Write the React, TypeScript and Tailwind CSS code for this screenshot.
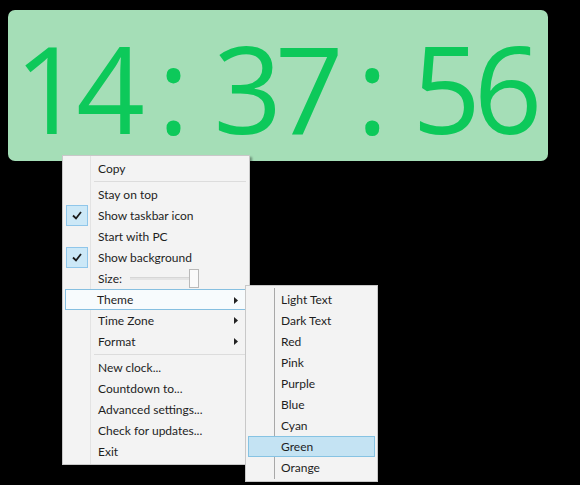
import React from "react"

const ui = { fontFamily: 'Lato, "Noto Sans", sans-serif' }

type Item =
  | { kind: "item"; label: string; checked?: boolean; sub?: boolean; active?: boolean }
  | { kind: "sep" }
  | { kind: "size" }

const menuItems: Item[] = [
  { kind: "item", label: "Copy" },
  { kind: "sep" },
  { kind: "item", label: "Stay on top" },
  { kind: "item", label: "Show taskbar icon", checked: true },
  { kind: "item", label: "Start with PC" },
  { kind: "item", label: "Show background", checked: true },
  { kind: "size" },
  { kind: "item", label: "Theme", sub: true, active: true },
  { kind: "item", label: "Time Zone", sub: true },
  { kind: "item", label: "Format", sub: true },
  { kind: "sep" },
  { kind: "item", label: "New clock..." },
  { kind: "item", label: "Countdown to..." },
  { kind: "item", label: "Advanced settings..." },
  { kind: "item", label: "Check for updates..." },
  { kind: "item", label: "Exit" },
]

const themes = ["Light Text", "Dark Text", "Red", "Pink", "Purple", "Blue", "Cyan", "Green", "Orange"]

function Check() {
  return (
    <div className="w-[22px] h-[21px] bg-[#cce8f7] border border-[#8fc6ea] flex items-center justify-center">
      <svg width="10" height="9" viewBox="0 0 10 9">
        <path d="M1 4.5 L4 7.5 L9 1" fill="none" stroke="#1a1a1a" strokeWidth="1.8" />
      </svg>
    </div>
  )
}

function Arrow() {
  return (
    <svg width="4" height="7" viewBox="0 0 4 7" className="absolute right-[8px] top-[7px]">
      <path d="M0 0 L4 3.5 L0 7 Z" fill="#222" />
    </svg>
  )
}

function MenuRow({ item }: { item: Item }) {
  if (item.kind === "sep") {
    return (
      <div className="h-[5px] flex items-center pl-[31px] pr-[3px]">
        <div className="h-px w-full bg-[#dcdcdc]" />
      </div>
    )
  }
  if (item.kind === "size") {
    return (
      <div className="relative h-[21px] flex items-center">
        <div className="w-[35px]" />
        <span className="text-[12px] text-[#1e1e1e] leading-none">Size:</span>
        <div className="relative ml-[8px] w-[69px] h-[3px] bg-[#e4e4e4] border-t border-[#d6d6d6]">
          <div className="absolute left-[59px] top-[-9px] w-[10px] h-[19px] bg-[#fafafa] border border-[#b9b9b9]" />
        </div>
      </div>
    )
  }
  return (
    <div
      className={`relative h-[21px] flex items-center ${
        item.active ? "bg-[#f7fbfd] border border-[#86bfe0] mx-[2px]" : "mx-[3px]"
      }`}
    >
      <div className={`w-[22px] h-full flex items-center ${item.active ? "ml-[-1px]" : ""}`}>
        {item.checked && <Check />}
      </div>
      <span className="ml-[10px] text-[12px] text-[#1e1e1e] leading-none">{item.label}</span>
      {item.sub && <Arrow />}
    </div>
  )
}

export default function App() {
  return (
    <div className="relative w-[580px] h-[485px] bg-black overflow-hidden" style={ui}>
      {/* clock panel */}
      <div className="ml-[8px] pt-[10px]">
        <div
          className="w-[540px] h-[151px] rounded-[7px] bg-[#a5deb7] flex items-center justify-center pt-[4px] pr-[6px] text-[#0dc95a] text-[120px] leading-[120px] font-medium"
          style={{ fontFamily: '"Open Sans", "Noto Sans", sans-serif' }}
        >
          <span className="tracking-[-7px]">14</span>
          <span className="ml-[20px] mr-[24px]">:</span>
          <span className="tracking-[-7px]">37</span>
          <span className="ml-[20px] mr-[24px]">:</span>
          <span className="tracking-[-7px]">56</span>
        </div>
      </div>

      {/* context menu */}
      <div className="absolute left-[62px] top-[155px] w-[188px] h-[310px] bg-[#f3f3f3] border border-[#c8c8c8] py-[2px] shadow-[2px_2px_2px_rgba(0,0,0,0.35)]">
        <div className="absolute left-[27px] top-0 bottom-0 w-px bg-[#e3e3e3]" />
        <div className="relative">
          {menuItems.map((it, i) => (
            <MenuRow key={i} item={it} />
          ))}
        </div>
      </div>

      {/* theme submenu */}
      <div className="absolute left-[245px] top-[285px] w-[133px] h-[197px] bg-[#f3f3f3] border border-[#c8c8c8] py-[3px] shadow-[2px_2px_2px_rgba(0,0,0,0.35)]">
        <div className="absolute left-[28px] top-[2px] bottom-[2px] w-px bg-[#a8a8a8]" />
        <div className="relative">
          {themes.map((t) => (
            <div
              key={t}
              className={`h-[21px] flex items-center mx-[2px] ${
                t === "Green" ? "bg-[#c4e3f3] border border-[#86c3e3]" : "border border-transparent"
              }`}
            >
              <span className="ml-[32px] text-[12px] text-[#1e1e1e] leading-none">{t}</span>
            </div>
          ))}
        </div>
      </div>
    </div>
  )
}
